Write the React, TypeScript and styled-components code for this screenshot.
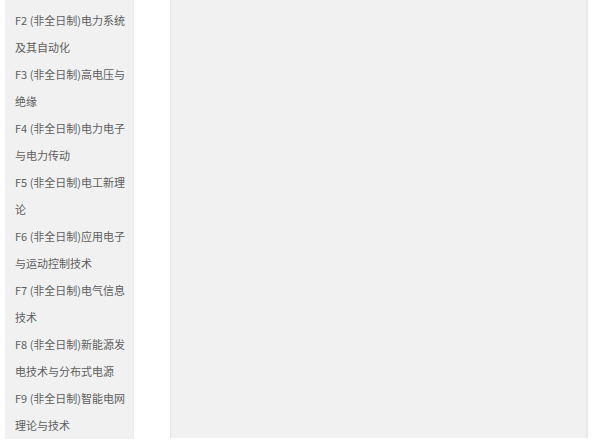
import React from 'react';
import styled, { createGlobalStyle } from 'styled-components';

const GlobalStyle = createGlobalStyle`
  html, body {
    margin: 0;
    padding: 0;
    background: #fff;
  }
`;

const Page = styled.div`
  width: 600px;
  height: 444px;
  display: flex;
  align-items: flex-start;
  overflow: hidden;
  font-family: "Noto Sans CJK SC", "Noto Sans", sans-serif;
`;

const Sidebar = styled.ul`
  margin: 0 0 0 5px;
  padding: 7px 0 0 10px;
  width: 118px;
  height: 432px;
  list-style: none;
  background: #f1f1f1;
  border-right: 1px solid #ececec;
`;

const Item = styled.li`
  font-size: 11px;
  line-height: 27px;
  color: #5e5e5e;
  white-space: nowrap;
`;

const Line = styled.div``;

const Content = styled.div`
  margin-left: 36px;
  width: 415px;
  height: 438px;
  background: #f1f1f1;
  border-left: 1px solid #e4e4e4;
  border-right: 2px solid #e9e9e9;
`;

const items: string[][] = [
  ['F2 (非全日制)电力系统', '及其自动化'],
  ['F3 (非全日制)高电压与', '绝缘'],
  ['F4 (非全日制)电力电子', '与电力传动'],
  ['F5 (非全日制)电工新理', '论'],
  ['F6 (非全日制)应用电子', '与运动控制技术'],
  ['F7 (非全日制)电气信息', '技术'],
  ['F8 (非全日制)新能源发', '电技术与分布式电源'],
  ['F9 (非全日制)智能电网', '理论与技术'],
];

const App: React.FC = () => {
  return (
    <>
      <GlobalStyle />
      <Page>
        <Sidebar>
          {items.map((lines) => (
            <Item key={lines[0]}>
              {lines.map((l) => (
                <Line key={l}>{l}</Line>
              ))}
            </Item>
          ))}
        </Sidebar>
        <Content />
      </Page>
    </>
  );
};

export default App;
